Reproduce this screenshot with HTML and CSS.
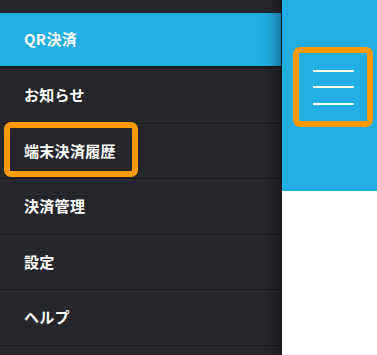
FILE: index.html
```html
<!DOCTYPE html>
<html lang="ja">
<head>
    <meta charset="UTF-8">
    <meta name="viewport" content="width=device-width, initial-scale=1.0">
    <title>メニュー</title>
    <link rel="stylesheet" href="styles.css">
</head>
<body>

    <nav class="sidebar">
        <div class="top-band"></div>
        <a class="item active" href="#">QR決済</a>
        <a class="item" href="#">お知らせ</a>
        <a class="item marked" href="#">端末決済履歴<span class="highlight"></span></a>
        <a class="item" href="#">決済管理</a>
        <a class="item" href="#">設定</a>
        <a class="item" href="#">ヘルプ</a>
    </nav>

    <main class="content">
        <header class="bar">
            <button class="menu-button" aria-label="menu">
                <span class="line"></span>
                <span class="line"></span>
                <span class="line"></span>
            </button>
        </header>
    </main>

</body>
</html>
```

FILE: styles.css
```css
body {
    margin: 0;
    padding: 0;
    display: flex;
    height: 355px;
    overflow: hidden;
    background-color: #fff;
    font-family: "Noto Sans CJK JP", "Noto Sans", sans-serif;
}
.sidebar {
    width: 281px;
    flex-shrink: 0;
    background-color: #25262b;
    display: flex;
    flex-direction: column;
}
.top-band {
    height: 13px;
    flex-shrink: 0;
}
.item {
    position: relative;
    display: flex;
    align-items: center;
    height: 53px;
    box-sizing: border-box;
    flex-shrink: 0;
    padding: 0 0 3px 24px;
    height: 55px;
    color: #fff;
    text-decoration: none;
    font-size: 15px;
    font-weight: 700;
    letter-spacing: 0.3px;
    border-bottom: 1px solid #18191c;
    border-top: 1px solid #2b2c31;
    margin-bottom: 0.6px;
}
.item.active {
    background-color: #22ade3;
    border-top: none;
    height: 55px;
    border-bottom: 2px solid #1a1b1e;
}
.highlight {
    position: absolute;
    top: -3px;
    left: 4px;
    width: 122px;
    height: 43px;
    border: 6px solid #ff9a00;
    border-radius: 7px;
}
.content {
    flex: 1;
    position: relative;
    z-index: 2;
    background-color: #fff;
    box-shadow: -4px 0 14px rgba(0, 0, 0, 0.4);
    border-left: 1px solid #141518;
}
.bar {
    height: 191px;
    background-color: #22ade3;
    padding: 47px 0 0 11px;
    box-sizing: border-box;
}
.menu-button {
    width: 80px;
    height: 80px;
    box-sizing: border-box;
    border: 6px solid #ff9a00;
    border-radius: 7px;
    background: transparent;
    padding: 0;
    display: flex;
    flex-direction: column;
    align-items: center;
    justify-content: center;
    gap: 14.5px;
}
.line {
    display: block;
    width: 41px;
    height: 2px;
    background-color: #fff;
}
```
